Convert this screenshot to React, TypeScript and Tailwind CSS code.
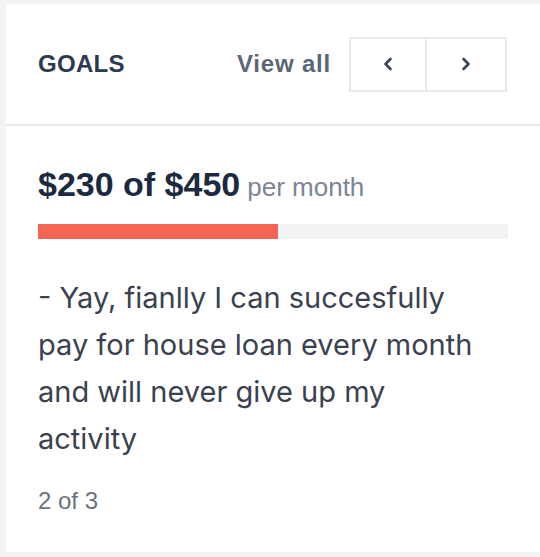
import React from "react";

const goal = { current: 230, total: 450 };

function Chevron({ dir }: { dir: "left" | "right" }) {
  return (
    <svg width="10" height="14" viewBox="0 0 10 14" fill="none">
      <polyline
        points={dir === "left" ? "7.5,2 2.5,7 7.5,12" : "2.5,2 7.5,7 2.5,12"}
        stroke="#3a4656"
        strokeWidth="2.6"
        strokeLinecap="round"
        strokeLinejoin="round"
      />
    </svg>
  );
}

export default function App() {
  const pct = goal.current / goal.total;
  return (
    <div
      className="w-[540px] h-[557px] bg-[#f2f3f5] pt-[4px] pl-[6px] pb-[5px]"
      style={{ fontFamily: '"Liberation Sans", Arial, sans-serif' }}
    >
      <div className="bg-white h-full flex flex-col">
        <div className="h-[122px] flex items-center justify-between pl-[32px] pr-[33px] border-b-2 border-[#e7ebf0]">
          <div className="text-[24px] font-bold text-[#2c3a4f] tracking-[0.3px]">GOALS</div>
          <div className="flex items-center gap-[18px]">
            <span className="text-[24px] font-bold text-[#5b6777] tracking-[0.8px]">View all</span>
            <div className="flex border-2 border-[#e7ebf0] h-[55px]">
              <button className="w-[76px] flex items-center justify-center border-r-2 border-[#e7ebf0]">
                <Chevron dir="left" />
              </button>
              <button className="w-[78px] flex items-center justify-center">
                <Chevron dir="right" />
              </button>
            </div>
          </div>
        </div>
        <div className="pl-[32px] pr-[32px] pt-[38px]">
          <div className="flex items-baseline h-[40px] leading-[40px]">
            <span className="text-[34px] font-bold text-[#1b2a41]">$230 of $450</span>
            <span className="ml-[7px] text-[26px] text-[#7b8593]">per month</span>
          </div>
          <div className="mt-[20px] h-[15px] bg-[#f1f3f5] w-full">
            <div className="h-full bg-[#f56553]" style={{ width: `${pct * 100}%` }} />
          </div>
          <p
            className="mt-[35px] w-[445px] text-[29px] leading-[47px] text-[#3a4250]"
            style={{ fontFamily: 'Inter, "Noto Sans", sans-serif' }}
          >
            - Yay, fianlly I can succesfully pay for house loan every month and will never give up my activity
          </p>
          <div className="mt-[23px] text-[24px] leading-[32px] text-[#6b7280]">2 of 3</div>
        </div>
      </div>
    </div>
  );
}
